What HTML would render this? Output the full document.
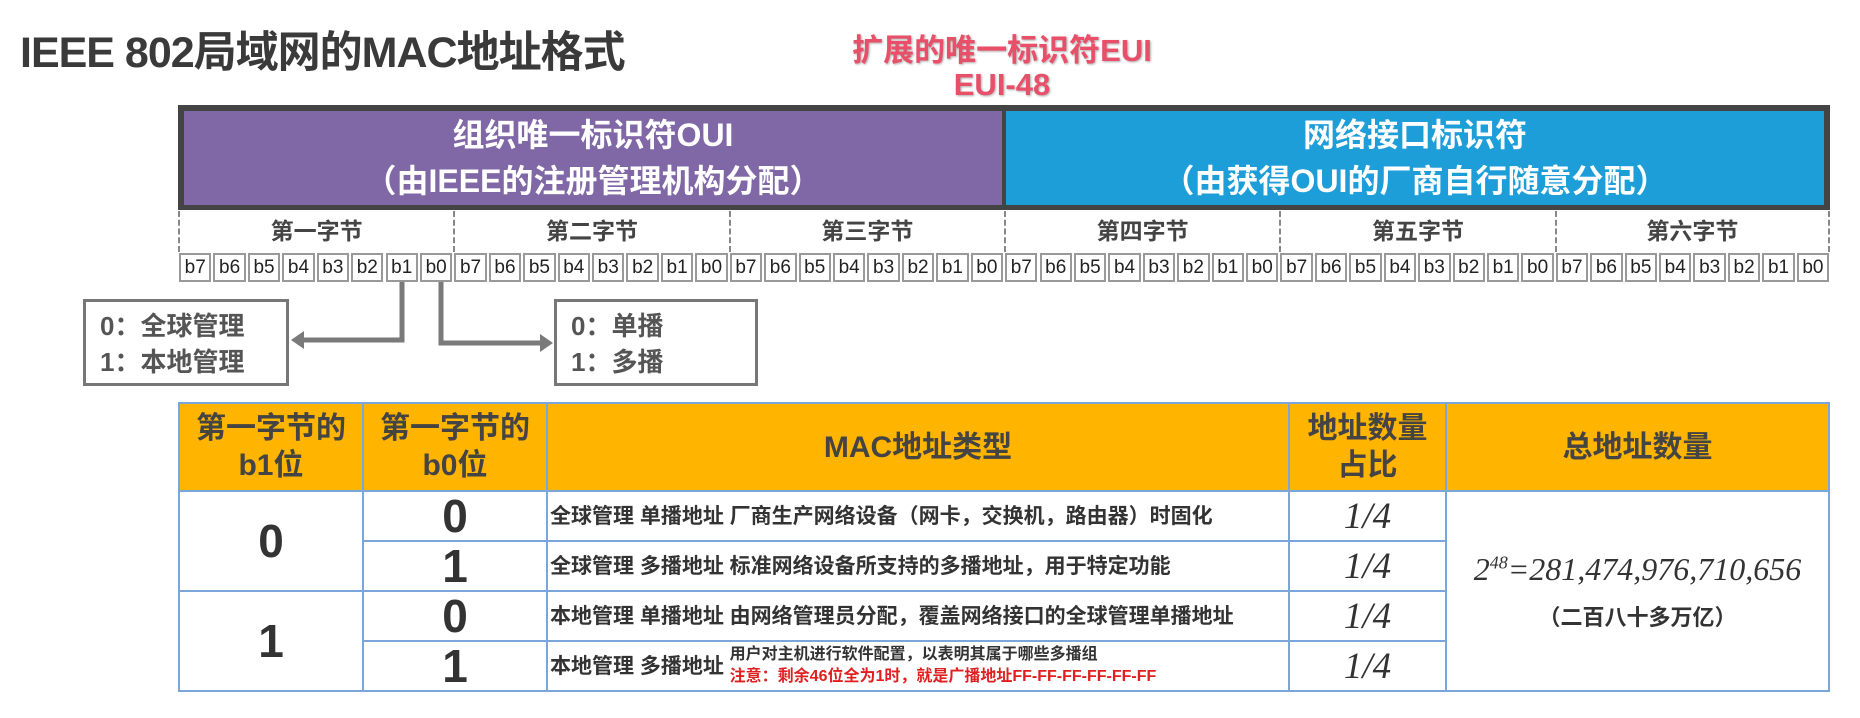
<!DOCTYPE html>
<html><head><meta charset="utf-8"><style>
*{margin:0;padding:0;box-sizing:border-box}
body{width:1860px;height:718px;background:#fff;position:relative;overflow:hidden;font-family:"Liberation Sans","Noto Sans CJK SC",sans-serif;font-weight:bold}
.a{position:absolute}
.title{left:20px;top:18px;font-size:43px;color:#3a3a3a;letter-spacing:-1px}
.eui{left:750px;width:504px;text-align:center;color:#e8506a;font-size:31px;text-shadow:1px 1px 2px #aaa}
.bar{left:178px;top:105px;width:1652px;height:105px;background:#444;}
.p{left:184px;top:111px;width:818px;height:94px;background:#8068a6;color:#fff;text-align:center;font-size:32px;line-height:46px;padding-top:1px}
.b{left:1006px;top:111px;width:818px;height:94px;background:#1e9ed8;color:#fff;text-align:center;font-size:32px;line-height:46px;padding-top:1px}
.byte{top:211px;height:41px;width:275.33px;text-align:center;line-height:41px;font-size:23px;color:#444;border-left:2px dashed #888}
.bit{top:253px;height:29px;width:32.4px;border:2px solid #999;text-align:center;line-height:25px;font-size:19px;font-weight:normal;color:#222;background:#fff}
.box{border:3px solid #777;font-size:26px;color:#555;line-height:36px;padding:6px 0 0 14px}
table{position:absolute;left:178px;top:402px;border-collapse:collapse;width:1652px;table-layout:fixed}
td{border:2px solid #7aa6dc;text-align:center;color:#333;line-height:1;padding:0}
tr.r td{height:50px}
th{border:2px solid #7aa6dc;background:#ffb400;color:#444;font-size:30px;line-height:37px;height:88px;padding:0}
.big{font-size:46px}
.t{text-align:left;font-size:21px;padding-left:2px;white-space:nowrap;overflow:hidden}
.q{font-family:"Liberation Serif",serif;font-style:italic;font-weight:normal;font-size:37px}
</style></head><body>
<div class="a title">IEEE 802局域网的MAC地址格式</div>
<div class="a eui" style="top:25px">扩展的唯一标识符EUI</div>
<div class="a eui" style="top:67px">EUI-48</div>
<div class="a bar"></div>
<div class="a p">组织唯一标识符OUI<br>（由IEEE的注册管理机构分配）</div>
<div class="a b">网络接口标识符<br>（由获得OUI的厂商自行随意分配）</div>
<div class="a byte" style="left:178px">第一字节</div>
<div class="a byte" style="left:453.3px">第二字节</div>
<div class="a byte" style="left:728.7px">第三字节</div>
<div class="a byte" style="left:1004px">第四字节</div>
<div class="a byte" style="left:1279.3px">第五字节</div>
<div class="a byte" style="left:1554.7px;border-right:2px dashed #888">第六字节</div>
<div id="bits"></div>
<script>
var h='';for(var i=0;i<48;i++){h+='<div class="a bit" style="left:'+(178+i*34.42+1)+'px">b'+(7-i%8)+'</div>';}
document.getElementById('bits').innerHTML=h;
</script>
<svg class="a" style="left:0;top:0" width="1860" height="718">
<polyline points="402,282 402,340 300,340" fill="none" stroke="#7a7a7a" stroke-width="5"/>
<polygon points="291,340 304,331 304,349" fill="#7a7a7a"/>
<polyline points="441,282 441,343 542,343" fill="none" stroke="#7a7a7a" stroke-width="5"/>
<polygon points="553,343 540,334 540,352" fill="#7a7a7a"/>
</svg>
<div class="a box" style="left:83px;top:299px;width:206px;height:87px">0：全球管理<br>1：本地管理</div>
<div class="a box" style="left:554px;top:299px;width:204px;height:87px">0：单播<br>1：多播</div>
<table>
<colgroup><col style="width:184px"><col style="width:184px"><col style="width:742px"><col style="width:157px"><col></colgroup>
<tr><th>第一字节的<br>b1位</th><th>第一字节的<br>b0位</th><th>MAC地址类型</th><th>地址数量<br>占比</th><th>总地址数量</th></tr>
<tr class="r"><td rowspan="2" class="big">0</td><td class="big">0</td><td class="t">全球管理 单播地址 厂商生产网络设备（网卡，交换机，路由器）时固化</td><td class="q">1/4</td>
<td rowspan="4"><div class="q" style="font-size:32px">2<sup style="font-size:18px">48</sup>=281,474,976,710,656</div><div style="font-size:22px;margin-top:22px">（二百八十多万亿）</div></td></tr>
<tr class="r"><td class="big">1</td><td class="t">全球管理 多播地址 标准网络设备所支持的多播地址，用于特定功能</td><td class="q">1/4</td></tr>
<tr class="r"><td rowspan="2" class="big">1</td><td class="big">0</td><td class="t">本地管理 单播地址 由网络管理员分配，覆盖网络接口的全球管理单播地址</td><td class="q">1/4</td></tr>
<tr class="r"><td class="big">1</td><td class="t"><div style="display:flex;align-items:center"><span>本地管理 多播地址&nbsp;</span><span style="font-size:16px;line-height:22px">用户对主机进行软件配置，以表明其属于哪些多播组<br><span style="color:#e02020">注意：剩余46位全为1时，就是广播地址FF-FF-FF-FF-FF-FF</span></span></div></td><td class="q">1/4</td></tr>
</table>
</body></html>
